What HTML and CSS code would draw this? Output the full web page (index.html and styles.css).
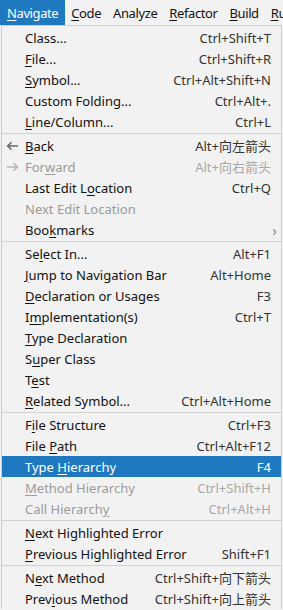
FILE: index.html
```html
<!DOCTYPE html>
<html lang="en">
<head>
    <meta charset="UTF-8">
    <title>Navigate menu</title>
    <link rel="stylesheet" href="styles.css">
</head>
<body>
    <div class="menubar">
        <span class="top-item active"><u>N</u>avigate</span>
        <span class="top-item"><u>C</u>ode</span>
        <span class="top-item">Analyze</span>
        <span class="top-item"><u>R</u>efactor</span>
        <span class="top-item"><u>B</u>uild</span>
        <span class="top-item"><u>R</u>u</span>
    </div>

    <div class="menu">
        <div class="row"><span class="icon"></span><span class="label">Class...</span><span class="key">Ctrl+Shift+T</span></div>
        <div class="row"><span class="icon"></span><span class="label"><u>F</u>ile...</span><span class="key">Ctrl+Shift+R</span></div>
        <div class="row"><span class="icon"></span><span class="label"><u>S</u>ymbol...</span><span class="key">Ctrl+Alt+Shift+N</span></div>
        <div class="row"><span class="icon"></span><span class="label">Custom Folding...</span><span class="key">Ctrl+Alt+.</span></div>
        <div class="row"><span class="icon"></span><span class="label"><u>L</u>ine/Column...</span><span class="key">Ctrl+L</span></div>
        <div class="sep"></div>

        <div class="row">
            <span class="icon">
                <svg width="13" height="10" viewBox="0 0 13 10"><path d="M12 5H2M5.5 1.2L1.7 5l3.8 3.8" fill="none" stroke="#6a6a6a" stroke-width="1.6"/></svg>
            </span>
            <span class="label"><u>B</u>ack</span><span class="key">Alt+向左箭头</span>
        </div>
        <div class="row disabled">
            <span class="icon">
                <svg width="13" height="10" viewBox="0 0 13 10"><path d="M1 5h10M7.5 1.2L11.3 5l-3.8 3.8" fill="none" stroke="#b4b4b4" stroke-width="1.6"/></svg>
            </span>
            <span class="label">For<u>w</u>ard</span><span class="key">Alt+向右箭头</span>
        </div>
        <div class="row"><span class="icon"></span><span class="label">Last Edit L<u>o</u>cation</span><span class="key">Ctrl+Q</span></div>
        <div class="row disabled"><span class="icon"></span><span class="label">Next Edit Location</span><span class="key"></span></div>
        <div class="row"><span class="icon"></span><span class="label">Boo<u>k</u>marks</span><span class="key arrow">&#8250;</span></div>
        <div class="sep"></div>

        <div class="row"><span class="icon"></span><span class="label">Se<u>l</u>ect In...</span><span class="key">Alt+F1</span></div>
        <div class="row"><span class="icon"></span><span class="label"><u>J</u>ump to Navigation Bar</span><span class="key">Alt+Home</span></div>
        <div class="row"><span class="icon"></span><span class="label"><u>D</u>eclaration or Usages</span><span class="key">F3</span></div>
        <div class="row"><span class="icon"></span><span class="label">I<u>m</u>plementation(s)</span><span class="key">Ctrl+T</span></div>
        <div class="row"><span class="icon"></span><span class="label"><u>T</u>ype Declaration</span><span class="key"></span></div>
        <div class="row"><span class="icon"></span><span class="label">S<u>u</u>per Class</span><span class="key"></span></div>
        <div class="row"><span class="icon"></span><span class="label">T<u>e</u>st</span><span class="key"></span></div>
        <div class="row"><span class="icon"></span><span class="label"><u>R</u>elated Symbol...</span><span class="key">Ctrl+Alt+Home</span></div>
        <div class="sep"></div>

        <div class="row"><span class="icon"></span><span class="label">F<u>i</u>le Structure</span><span class="key">Ctrl+F3</span></div>
        <div class="row"><span class="icon"></span><span class="label">File <u>P</u>ath</span><span class="key">Ctrl+Alt+F12</span></div>
        <div class="row selected"><span class="icon"></span><span class="label">Type <u>H</u>ierarchy</span><span class="key">F4</span></div>
        <div class="row disabled"><span class="icon"></span><span class="label"><u>M</u>ethod Hierarchy</span><span class="key">Ctrl+Shift+H</span></div>
        <div class="row disabled"><span class="icon"></span><span class="label">Call Hierarch<u>y</u></span><span class="key">Ctrl+Alt+H</span></div>
        <div class="sep"></div>

        <div class="row"><span class="icon"></span><span class="label"><u>N</u>ext Highlighted Error</span><span class="key"></span></div>
        <div class="row"><span class="icon"></span><span class="label"><u>P</u>revious Highlighted Error</span><span class="key">Shift+F1</span></div>
        <div class="sep"></div>

        <div class="row"><span class="icon"></span><span class="label">N<u>e</u>xt Method</span><span class="key">Ctrl+Shift+向下箭头</span></div>
        <div class="row"><span class="icon"></span><span class="label">Prev<u>i</u>ous Method</span><span class="key">Ctrl+Shift+向上箭头</span></div>
    </div>
</body>
</html>
```

FILE: styles.css
```css
* {
    margin: 0;
    padding: 0;
    box-sizing: border-box;
}

body {
    background-color: #f2f2f2;
    color: #111;
    font-family: "Noto Sans", "Noto Sans CJK SC", sans-serif;
    font-size: 13px;
    width: 283px;
    height: 610px;
    overflow: hidden;
}

u {
    text-decoration-thickness: 1px;
    text-underline-offset: 2px;
}

.menubar {
    display: flex;
    height: 25px;
    background-color: #f2f2f2;
    font-size: 13px;
    letter-spacing: -0.4px;
    white-space: nowrap;
    overflow: hidden;
}

.top-item {
    display: flex;
    align-items: center;
    padding: 0 6px 0 6px;
    flex-shrink: 0;
}

.top-item.active {
    background-color: #1e79c1;
    color: #fff;
    padding-left: 7px;
    padding-right: 7px;
}

.menu {
    width: 281px;
    margin-left: 1px;
    border: 1px solid #cfcfcf;
    border-bottom: none;
    padding-top: 1px;
    background-color: #f2f2f2;
}

.row {
    display: grid;
    grid-template-columns: 23px 1fr auto;
    align-items: center;
    height: 21px;
    padding-right: 10px;
    white-space: nowrap;
}

.icon {
    display: flex;
    align-items: center;
    padding-left: 4px;
}

.key {
    text-align: right;
    color: #333;
}

.key.arrow {
    color: #888;
    margin-right: -6px;
    font-size: 15px;
}

.row.disabled {
    color: #9b9b9b;
}

.row.disabled .key {
    color: #a8a8a8;
}

.row.selected {
    background-color: #1e79c1;
    color: #fff;
}

.row.selected .key {
    color: #fff;
}

.sep {
    height: 1px;
    margin: 1px 0;
    background-color: #d2d2d2;
}
```
